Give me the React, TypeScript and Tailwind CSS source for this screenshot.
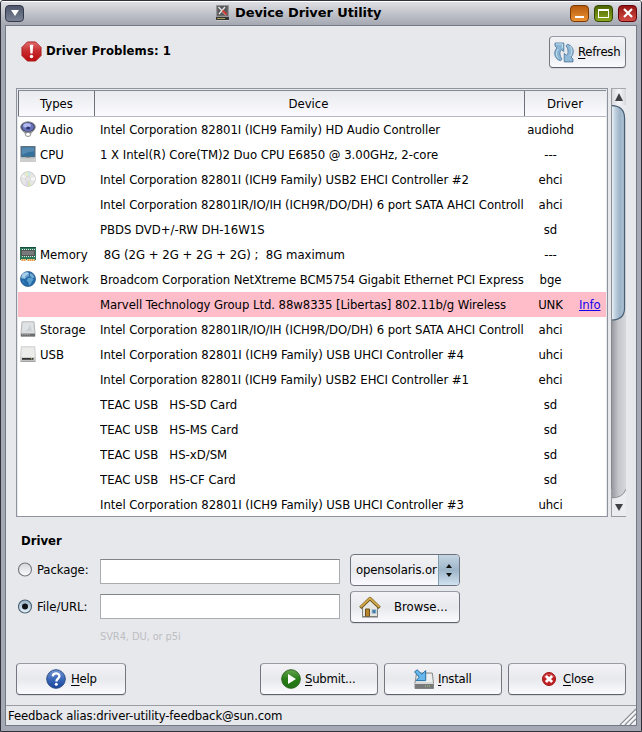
import React from "react";

type IconName =
  | "audio"
  | "cpu"
  | "dvd"
  | "memory"
  | "network"
  | "storage"
  | "usb";

interface Row {
  type?: string;
  icon?: IconName;
  device: string;
  driver: string;
  problem?: boolean;
  spacing?: string;
}

const rows: Row[] = [
  { type: "Audio", icon: "audio", device: "Intel Corporation 82801I (ICH9 Family) HD Audio Controller", driver: "audiohd", spacing: "tracking-[-0.08px]" },
  { type: "CPU", icon: "cpu", device: "1 X Intel(R) Core(TM)2 Duo CPU E6850 @ 3.00GHz, 2-core", driver: "---", spacing: "tracking-[-0.03px]" },
  { type: "DVD", icon: "dvd", device: "Intel Corporation 82801I (ICH9 Family) USB2 EHCI Controller #2", driver: "ehci", spacing: "tracking-[-0.08px]" },
  { device: "Intel Corporation 82801IR/IO/IH (ICH9R/DO/DH) 6 port SATA AHCI Controll", driver: "ahci", spacing: "tracking-[-0.08px]" },
  { device: "PBDS DVD+/-RW DH-16W1S", driver: "sd", spacing: "tracking-[-0.03px]" },
  { type: "Memory", icon: "memory", device: " 8G (2G + 2G + 2G + 2G) ;  8G maximum", driver: "---" },
  { type: "Network", icon: "network", device: "Broadcom Corporation NetXtreme BCM5754 Gigabit Ethernet PCI Express", driver: "bge", spacing: "tracking-[-0.1px]" },
  { device: "Marvell Technology Group Ltd. 88w8335 [Libertas] 802.11b/g Wireless", driver: "UNK", problem: true, spacing: "tracking-[-0.07px]" },
  { type: "Storage", icon: "storage", device: "Intel Corporation 82801IR/IO/IH (ICH9R/DO/DH) 6 port SATA AHCI Controll", driver: "ahci", spacing: "tracking-[-0.08px]" },
  { type: "USB", icon: "usb", device: "Intel Corporation 82801I (ICH9 Family) USB UHCI Controller #4", driver: "uhci", spacing: "tracking-[-0.06px]" },
  { device: "Intel Corporation 82801I (ICH9 Family) USB2 EHCI Controller #1", driver: "ehci", spacing: "tracking-[-0.08px]" },
  { device: "TEAC USB   HS-SD Card", driver: "sd" },
  { device: "TEAC USB   HS-MS Card", driver: "sd" },
  { device: "TEAC USB   HS-xD/SM", driver: "sd" },
  { device: "TEAC USB   HS-CF Card", driver: "sd" },
  { device: "Intel Corporation 82801I (ICH9 Family) USB UHCI Controller #3", driver: "uhci", spacing: "tracking-[-0.06px]" },
];

function TypeIcon({ name }: { name: IconName }) {
  return (
    <svg width="16" height="16" viewBox="0 0 16 16" className="-mt-px block shrink-0">
      {name === "audio" && (
        <g>
          <circle cx="8" cy="12.6" r="3" fill="#e2e2e2" stroke="#888" strokeWidth=".8" />
          <path d="M1 6C1 10 5 13 8 13s7-3 7-7z" fill="#85888e" />
          <ellipse cx="8" cy="6" rx="7.3" ry="5.2" fill="#3c4058" stroke="#8b8e98" />
          <ellipse cx="8" cy="6" rx="5.8" ry="4.2" fill="#6973bd" />
          <ellipse cx="7" cy="4.4" rx="3.8" ry="2.2" fill="#b3baf0" />
          <ellipse cx="8.2" cy="7" rx="2" ry="1.5" fill="#2c336c" />
          <ellipse cx="8" cy="13.2" rx="1.6" ry="1.4" fill="#fff" />
        </g>
      )}
      {name === "cpu" && (
        <g>
          <rect x="1" y=".5" width="14" height="10.5" fill="#34719d" stroke="#63717b" />
          <path d="M2 1.5h12v4Q8 5 2 9z" fill="#5689af" />
          <path d="M6 11h4v1H6z" fill="#888" />
          <path d="M.5 12h15l.4 3.5H.1z" fill="#d8dada" stroke="#b5b5b5" strokeWidth=".6" />
          <path d="M2 13h12M1.5 14.3h13" stroke="#b0b0b0" strokeWidth=".6" strokeDasharray="1 .6" />
        </g>
      )}
      {name === "dvd" && (
        <g>
          <circle cx="8" cy="8" r="7.4" fill="#e6e6e4" stroke="#c2c2c2" strokeWidth=".8" />
          <path d="M8 8 5 1.3A7 7 0 0 1 8 .9z" fill="#e4edc0" />
          <path d="M8 8V.9a7 7 0 0 1 3 .6z" fill="#c9e6e8" />
          <path d="M8 8 1.3 6 2.5 3.5z" fill="#f4f4f4" />
          <path d="m8 8 6.8-2 .1 4z" fill="#f8f8f8" />
          <path d="M8 8 5 14.5q1.5.7 3 .7z" fill="#e1d0ec" />
          <path d="M8 8v7.2q2 0 3.2-.8z" fill="#d6e7b2" />
          <circle cx="8" cy="8" r="2.5" fill="#f2f2f2" stroke="#c5c5c5" strokeWidth=".6" />
          <circle cx="8" cy="8" r="1" fill="#fff" stroke="#bbb" strokeWidth=".5" />
        </g>
      )}
      {name === "memory" && (
        <g shapeRendering="crispEdges">
          <path d="M0 1h16v13H0z" fill="#2d785b" />
          <path d="M0 1h16v1H0z" fill="#155039" />
          <path d="M2 3.5h13M2 10.5h13" stroke="#e3e6e4" strokeWidth="1" strokeDasharray="1 1" />
          <path d="M1 4h14v6H1z" fill="#555" />
          <path d="M2 5h12v4H2z" fill="#77797a" />
          <path d="M1 13h5v2H1zM7 13h8v2H7z" fill="#f0c88e" />
          <path d="M2 14h4M8 14h7" stroke="#df9a4c" strokeWidth="2" strokeDasharray="1 1" />
        </g>
      )}
      {name === "network" && (
        <g>
          <circle cx="8" cy="8" r="7.5" fill="#2469a8" stroke="#2f6090" strokeWidth=".8" />
          <path d="M1.2 6Q3 1.5 7 1l2 1-2 2-2 1 1 2-2 1-1-1-1 1z" fill="#8fc0e2" />
          <path d="m8 7 3.5-.5 2 2-1.5 2-1.5 3-1.5 1-.5-3-2-2z" fill="#5b9fce" />
          <path d="m10 2 3 1.8 1.4 3-2 .2L10 5z" fill="#74acd5" />
          <path d="m2 9 2 1 .5 3Q2.4 11.5 2 9" fill="#3a83bd" />
          <ellipse cx="5.5" cy="4" rx="3.8" ry="2.4" fill="#c3e2f4" opacity=".45" />
        </g>
      )}
      {name === "storage" && (
        <g>
          <path d="M2 .8h12L15 12v3.3H1V12z" fill="#d3d5d7" stroke="#aaa" strokeWidth=".8" />
          <path d="M2.8 1.5h10.4l.6 9H2.2z" fill="#e0e3e5" />
          <path d="M3.5 10Q9 9.5 10 3l2 7z" fill="#ccd0d3" />
          <path d="M1 12.3h14v3.1H1z" fill="#6c6e6e" />
          <path d="M2 13.7h8" stroke="#adadad" strokeDasharray="1 .7" />
          <path d="M1 12h14" stroke="#f4f4f4" strokeWidth=".6" />
        </g>
      )}
      {name === "usb" && (
        <g>
          <path d="M1.3.8h13.4l.7 10.5v4H.6v-4z" fill="#ececeb" stroke="#c2c2c1" strokeWidth=".8" />
          <path d="M.8 11h14.4v4.2H.8z" fill="#cfcfcd" />
          <path d="M2 12h11.5v1.8H2z" fill="#343434" />
          <path d="M.7 15.3h14.6" stroke="#979797" />
          <path d="M11 12.8h1" stroke="#b0d26a" />
        </g>
      )}
    </svg>
  );
}

function TitleIcon() {
  return (
    <svg width="13" height="16" viewBox="0 0 13 16" className="-mt-px block">
      <path d="M.5.5h12v11H.5z" fill="#69696a" stroke="#949496" />
      <path d="M2 1h9v9H2z" fill="#58595a" />
      <path d="m2.5 2 7.5 8M3 9l6-7" stroke="#e5e5e5" strokeWidth="1.4" />
      <path d="m6.5 5.5 4 4" stroke="#d73930" strokeWidth="2" />
      <path d="M0 12h13v3H0z" fill="#343536" />
      <path d="M1 13.5h8" stroke="#a99b4b" strokeWidth="1" />
      <path d="M0 15.5h13" stroke="#c9c9c9" />
    </svg>
  );
}

function WarningIcon() {
  return (
    <svg width="21" height="21" viewBox="0 0 22 22" className="block">
      <defs>
        <linearGradient id="stop" x2="0" y2="1">
          <stop stopColor="#df6c6c" />
          <stop offset=".46" stopColor="#c92f30" />
          <stop offset="1" stopColor="#b90b0d" />
        </linearGradient>
      </defs>
      <path d="M6.7 1h8.6L21 6.7v8.6L15.3 21H6.7L1 15.3V6.7z" fill="url(#stop)" stroke="#ad2021" />
      <path d="M9.2 4h3.6l-.7 9H9.9z" fill="#fff" />
      <circle cx="11" cy="16.3" r="1.8" fill="#fff" />
    </svg>
  );
}

function RefreshIcon() {
  return (
    <svg width="20" height="21" viewBox="0 0 20 21" className="block shrink-0">
      <g stroke="#527da1" strokeWidth=".9" strokeLinejoin="round">
        <path d="M6.5 18.8C-.6 16.5-.4 9 3 6L1 4V1h8.8v8.5L7.3 7.7C5.5 9.5 5.3 13.5 8 17z" fill="#8bb5d4" />
        <path d="M13.5 2.2c7.1 2.3 6.9 9.8 3.5 12.8l2 2v2.9h-8.8v-8.5l2.5 1.9c1.8-1.8 2-6-.7-9.5z" fill="#90b9d7" />
      </g>
      <path d="M2 2h6.5v4M4.3 7C1.7 10 2 14 4.4 16.3M15.7 4c2.5 2 3 7 .6 10" fill="none" stroke="#c6dfef" strokeWidth="1" />
    </svg>
  );
}

function HouseIcon() {
  return (
    <svg width="22" height="22" viewBox="0 0 22 22" className="block shrink-0">
      <path d="M3.5 10 11 4l7.5 6v10.5h-15z" fill="#e6e6e2" stroke="#84847f" />
      <path d="m1.3 11.8 9.7-9.3 9.7 9.3" fill="none" stroke="#6d531b" strokeWidth="3.2" strokeLinejoin="round" />
      <path d="m1.6 11.2 9.4-8.9 9.4 8.9" fill="none" stroke="#d4aa4b" strokeWidth="1.8" />
      <path d="M6.5 13h4v7.5h-4z" fill="#b6842d" stroke="#6c501c" />
      <path d="M13 13.5h4v4h-4z" fill="#417ead" stroke="#adc2d2" />
      <path d="M3 21h16" stroke="#777" />
    </svg>
  );
}

function HelpIcon() {
  return (
    <svg width="20" height="20" viewBox="0 0 20 20" className="block shrink-0">
      <defs>
        <linearGradient id="help" x2="0" y2="1">
          <stop stopColor="#7396d4" />
          <stop offset=".5" stopColor="#3c68b8" />
          <stop offset="1" stopColor="#17449d" />
        </linearGradient>
      </defs>
      <circle cx="10" cy="10" r="9.3" fill="url(#help)" stroke="#2e4e87" />
      <path d="M6.8 7.4C6.9 3.3 13.5 3.6 13.4 7.2c0 2.2-3 2.7-3 5.2" fill="none" stroke="#fff" strokeWidth="2.3" />
      <circle cx="10.3" cy="15.2" r="1.5" fill="#fff" />
    </svg>
  );
}

function SubmitIcon() {
  return (
    <svg width="20" height="20" viewBox="0 0 20 20" className="block shrink-0">
      <defs>
        <linearGradient id="go" x2="0" y2="1">
          <stop stopColor="#66a450" />
          <stop offset=".5" stopColor="#287d18" />
          <stop offset="1" stopColor="#1d7310" />
        </linearGradient>
      </defs>
      <circle cx="10" cy="10" r="9.3" fill="url(#go)" stroke="#2b631f" />
      <path d="m7 5 8 5-8 5z" fill="#fff" />
    </svg>
  );
}

function InstallIcon() {
  return (
    <svg width="20" height="21" viewBox="0 0 20 21" className="block shrink-0">
      <path d="M2.5 4h15.8l1.2 10v5.5H1V14z" fill="#d8dada" stroke="#8b8d8d" />
      <path d="M3.5 5h14l1 8H2z" fill="#eceeee" />
      <path d="M1 14h18.5v5.5H1z" fill="#777a79" />
      <path d="M1 14.5h18.5" stroke="#d8d8d8" />
      <path d="M11 17h6" stroke="#a6c87f" strokeDasharray="1 1" />
      <path d="m.6 2.8 2.6-2 4.6 4.4 3.9-3.6v10H2l3.2-3.4z" fill="#66b7ec" stroke="#246fa3" strokeLinejoin="round" />
    </svg>
  );
}

function CloseIcon() {
  return (
    <svg width="14" height="14" viewBox="0 0 14 14" className="block shrink-0">
      <circle cx="7" cy="7" r="6.5" fill="#bf2023" stroke="#a41517" />
      <path d="M2 5q5-5.5 10 0" fill="none" stroke="#d65c5e" strokeWidth="1.2" />
      <path d="m3.9 3.9 6.2 6.2m0-6.2-6.2 6.2" stroke="#fff" strokeWidth="2.8" />
    </svg>
  );
}

function Mnemonic({ text }: { text: string }) {
  return (
    <span className="tracking-[-0.25px] whitespace-nowrap">
      <span className="underline decoration-1 underline-offset-2">{text[0]}</span>
      {text.slice(1)}
    </span>
  );
}

const buttonLook =
  "flex h-[32px] shrink-0 items-center rounded-[4px] border border-t-[#999ba4] border-x-[#747680] border-b-[#60626b] bg-linear-to-b from-[#f3f3f6] via-[#e8e9ed] to-[#fafaff] shadow-[0_1px_0_#d3d5da]";

function Button({ className, children }: { className: string; children: React.ReactNode }) {
  return <button className={buttonLook + " " + className}>{children}</button>;
}

function Radio({ checked }: { checked?: boolean }) {
  return (
    <svg width="15" height="15" viewBox="0 0 15 15" className="block">
      <defs>
        <linearGradient id="radioOff" x2="0" y2="1">
          <stop stopColor="#d5d6da" />
          <stop offset="1" stopColor="#fcfcff" />
        </linearGradient>
        <linearGradient id="radioOn" x2="0" y2="1">
          <stop stopColor="#96b0c4" />
          <stop offset="1" stopColor="#eaf6ff" />
        </linearGradient>
      </defs>
      <circle cx="7" cy="7.5" r="6.5" fill={checked ? "url(#radioOn)" : "url(#radioOff)"} stroke={checked ? "#4b6073" : "#777980"} strokeWidth="1.1" />
      {checked && <circle cx="7" cy="7.5" r="3" fill="#101215" />}
    </svg>
  );
}

function ScrollBar() {
  return (
    <div className="flex h-[429px] w-[15px] flex-col border-y border-t-[#a6a8ae] border-b-[#989ba2] bg-linear-to-r from-[#929499] via-[#c4c6cb] to-[#d6d8dd]">
      <div className="flex h-[16px] items-center justify-center border-l border-[#9698a0] bg-linear-to-r from-[#d8d9de] via-[#f7f7fa] to-[#d5d7dc]">
        <svg width="8" height="8" viewBox="0 0 8 8"><path d="m4 0 4 8H0z" fill="#414247" /></svg>
      </div>
      <svg width="15" height="216" viewBox="0 0 15 216" className="block shrink-0">
        <defs>
          <linearGradient id="thumb">
            <stop stopColor="#f0f7fc" />
            <stop offset=".25" stopColor="#c4d4e1" />
            <stop offset=".65" stopColor="#9db3c7" />
            <stop offset="1" stopColor="#b0c5d6" />
          </linearGradient>
        </defs>
        <path d="M0 0h15v14Q10 0 0 0z" fill="#e9eaed" />
        <path d="M.5.7Q13.5 1 13.5 13v190q0 12-13 12z" fill="url(#thumb)" />
        <path d="M.5.7Q13.5 1 13.5 13v190q0 12-13 12" fill="none" stroke="#465e74" strokeWidth="1.2" />
        <path d="M.5 0v216" stroke="#8b8d94" />
      </svg>
      <div className="grow border-l border-[#85878c]" />
      <svg width="15" height="27" viewBox="0 0 15 27" className="block shrink-0">
        <path d="M0 9Q12 9 15 0V27H0z" fill="#ebecf0" />
        <path d="M0 9Q12 9 15 0" fill="none" stroke="#8f9197" />
        <path d="M.5 0v27" stroke="#9a9ca3" />
        <path d="M4 15h8l-4 7z" fill="#414247" />
      </svg>
    </div>
  );
}

export default function App() {
  return (
    <div className="flex h-[732px] w-[642px] flex-col overflow-hidden rounded-t-[3px] border border-[#30313a] bg-[#a5a9b4] px-[4px] pb-[5px] font-['DejaVu_Sans_Condensed','DejaVu_Sans',sans-serif] text-[13px] leading-[16px] text-black font-stretch-condensed">
      <header className="-mx-[4px] flex h-[24px] shrink-0 items-center border-t border-white bg-linear-to-b from-[#dedfe4] to-[#a4a8b1] pr-[4px] pb-px pl-[4px]">
        <div className="flex h-[17px] w-[19px] items-center justify-center rounded-[4px] border border-[#34394b] bg-linear-to-b from-[#4f566b] to-[#7b8496]">
          <svg width="8" height="6" viewBox="0 0 8 6"><path d="M0 0h8L4 6z" fill="#fff" /></svg>
        </div>
        <div className="flex grow items-center gap-[7px] pl-[192px]">
          <TitleIcon />
          <h1 className="-ml-px font-['DejaVu_Sans',sans-serif] text-[13px] font-bold tracking-[-0.09px] whitespace-nowrap font-stretch-normal">Device Driver Utility</h1>
        </div>
        <div className="flex gap-[5px]">
          <div className="flex h-[17px] w-[19px] items-end justify-center rounded-[4px] border border-[#7c3800] bg-linear-to-b from-[#b65b0b] to-[#ec9435] pb-[3px]">
            <div className="h-[2px] w-[9px] bg-white" />
          </div>
          <div className="flex h-[17px] w-[19px] items-center justify-center rounded-[4px] border border-[#354900] bg-linear-to-b from-[#4c6600] to-[#8ba722]">
            <div className="h-[9px] w-[11px] border border-t-2 border-white" />
          </div>
          <div className="flex h-[17px] w-[19px] items-center justify-center rounded-[4px] border border-[#690009] bg-linear-to-b from-[#951111] to-[#d34c46]">
            <svg width="10" height="10" viewBox="0 0 10 10"><path d="m1 1 8 8m0-8L1 9" stroke="#fff" strokeWidth="2.2" /></svg>
          </div>
        </div>
      </header>

      <main className="flex grow flex-col border border-[#747987] bg-[#e7e8ec]">
        <section className="flex h-[62px] shrink-0 pr-[10px] pl-[15px]">
          <div className="flex grow gap-[4px] pt-[15px]">
            <WarningIcon />
            <h2 className="pt-[2px] font-bold tracking-[0.08px] whitespace-nowrap">Driver Problems: 1</h2>
          </div>
          <div className="pt-[10px]">
            <Button className="w-[77px] gap-[4px] pl-[4px]">
              <RefreshIcon />
              <Mnemonic text="Refresh" />
            </Button>
          </div>
        </section>

        <section className="flex shrink-0 gap-[3px] pl-[10px]">
          <div className="h-[429px] w-[592px] border border-[#8f939e] pt-px pl-px">
            <div className="flex h-[426px] w-[588px] flex-col overflow-hidden bg-white">
              <div className="flex h-[27px] shrink-0 border-t border-b border-t-[#858994] border-b-[#b6b9c2] bg-linear-to-b from-[#e9eaee] to-[#fafaff] text-center leading-[25px]">
                <div className="w-[77px] border-r border-l border-[#6e717a]">Types</div>
                <div className="w-[430px] border-r border-[#6e717a] pr-[2px]">Device</div>
                <div className="grow pr-px">Driver</div>
              </div>
              {rows.map((row, index) => (
                <div key={index} className={"flex h-[25px] shrink-0 items-center " + (row.problem ? "bg-[#ffbdc9]" : "bg-white")}>
                  <div className="flex w-[82px] items-center gap-[4px] pl-[2px]">
                    {row.icon && <TypeIcon name={row.icon} />}
                    {row.type}
                  </div>
                  <div className={"w-[424px] overflow-hidden whitespace-pre " + (row.spacing ?? "")}>{row.device}</div>
                  <div className="w-[53px] text-center tracking-[-0.1px]">{row.driver}</div>
                  {row.problem && <span className="pl-[2px] tracking-[-0.15px] text-[#1600ef] underline">Info</span>}
                </div>
              ))}
            </div>
          </div>
          <ScrollBar />
        </section>

        <section className="flex shrink-0 flex-col pl-[12px]">
          <h2 className="h-[37px] pt-[16px] pl-[3px] font-bold">Driver</h2>
          <div className="flex h-[37px]">
            <label className="flex w-[82px] gap-[4px] pt-[8px]">
              <Radio /><span className="tracking-[-0.1px]">Package:</span>
            </label>
            <input className="mt-[5px] h-[25px] w-[240px] border border-[#aaacb0] border-t-[#828488] bg-white" />
            <div className="ml-[10px] flex h-[32px] w-[110px] overflow-hidden rounded-[4px] border border-[#6c727e] bg-linear-to-b from-[#f3f3f6] via-[#e8e9ed] to-[#fafaff]">
              <span className="w-[87px] overflow-hidden pl-[5px] leading-[30px] tracking-[-0.15px] whitespace-nowrap">opensolaris.or</span>
              <span className="flex grow items-center justify-center border-l border-[#829caf] bg-linear-to-b from-[#c5d5e2] via-[#9eb5c9] to-[#d0e2f1]">
                <svg width="6" height="13" viewBox="0 0 6 13"><path d="M3 0 6 4H0zM0 9h6l-3 4z" fill="#111" /></svg>
              </span>
            </div>
          </div>
          <div className="flex h-[37px]">
            <label className="flex w-[82px] gap-[4px] pt-[8px]">
              <Radio checked /><span>File/URL:</span>
            </label>
            <input className="mt-[3px] h-[25px] w-[240px] border border-[#aaacb0] border-t-[#828488] bg-white" />
            <Button className="ml-[10px] w-[110px] gap-[13px] pl-[8px]">
              <HouseIcon />
              <span>Browse...</span>
            </Button>
          </div>
          <p className="h-[35px] pt-px pl-[82px] text-[11px] tracking-[-0.1px] text-[#bdbec2]">SVR4, DU, or p5i</p>
        </section>

        <footer className="flex h-[42px] shrink-0 pl-[10px]">
          <Button className="w-[110px] gap-[5px] pl-[29px]"><HelpIcon /><Mnemonic text="Help" /></Button>
          <Button className="ml-[134px] w-[118px] gap-[4px] pl-[20px]"><SubmitIcon /><Mnemonic text="Submit..." /></Button>
          <Button className="ml-[6px] w-[118px] gap-[4px] pl-[29px]"><InstallIcon /><Mnemonic text="Install" /></Button>
          <Button className="ml-[6px] w-[118px] gap-[7px] pl-[33px]"><CloseIcon /><Mnemonic text="Close" /></Button>
        </footer>
        <div className="flex grow items-end justify-between border-t border-[#9a9ca3] pl-[2px]">
          <span className="self-center tracking-[-0.13px]">Feedback alias:driver-utility-feedback@sun.com</span>
          <svg width="17" height="17" viewBox="0 0 17 17" className="block">
            <path d="M1 17 17 1M6 17 17 6m-6 11 6-6" stroke="#8b8f98" strokeWidth="1.3" />
            <path d="M3 17 17 3M8 17l9-9m-4 9 4-4" stroke="#fff" strokeWidth="1.2" />
          </svg>
        </div>
      </main>
    </div>
  );
}
